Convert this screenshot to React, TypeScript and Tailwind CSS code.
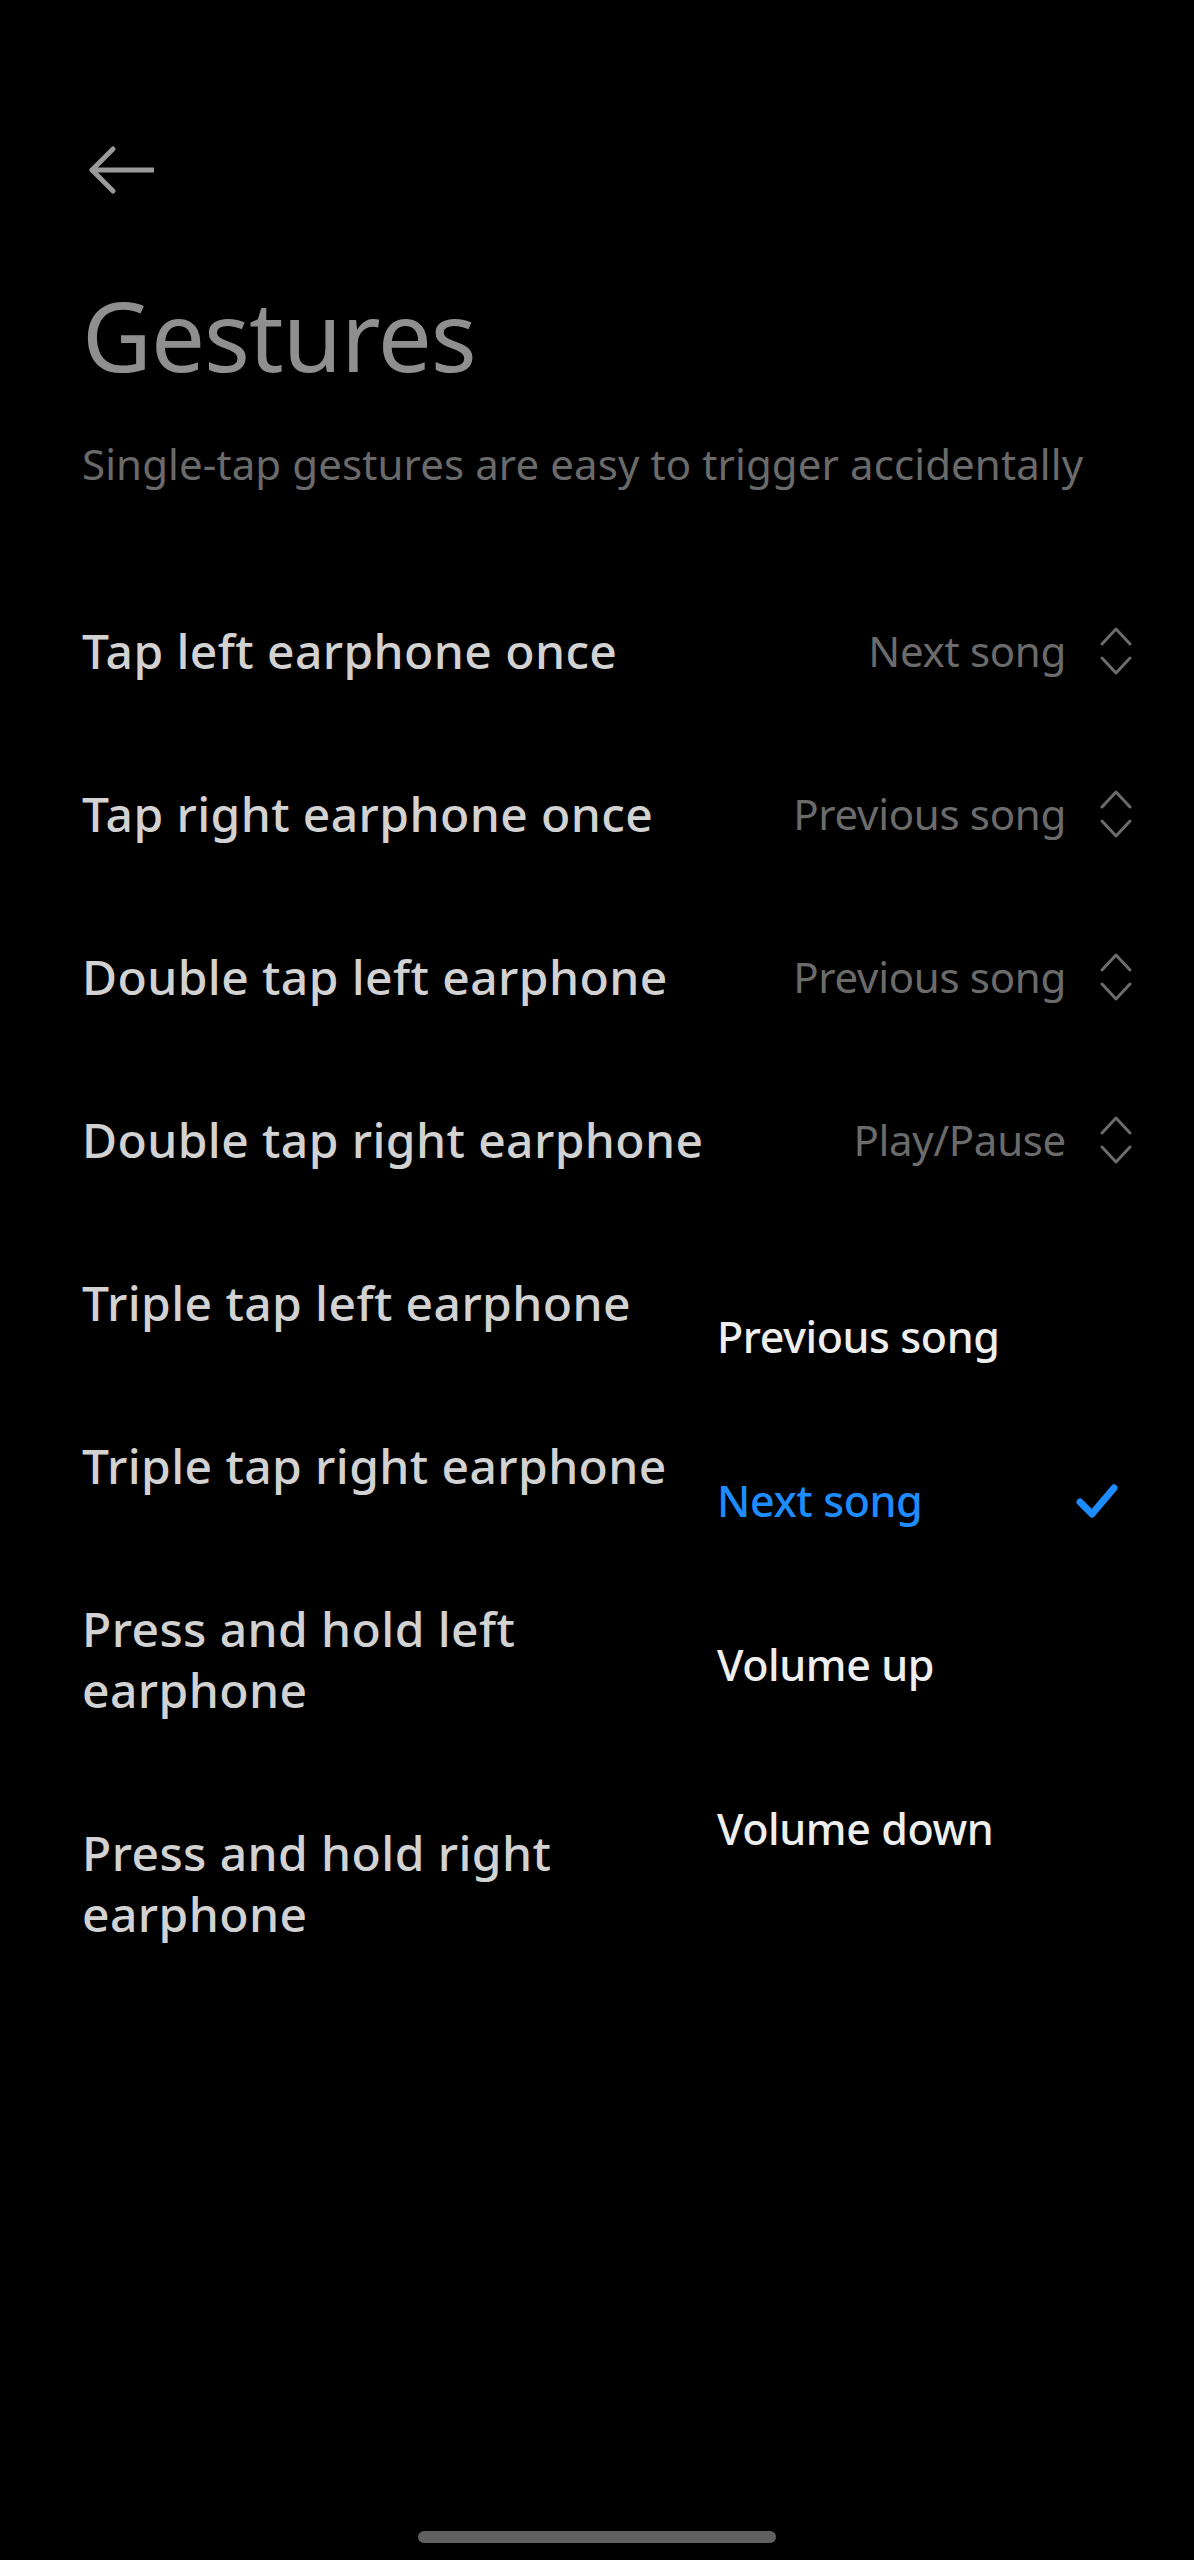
import React from 'react';

const rows: { label: string[]; value?: string }[] = [
  { label: ['Tap left earphone once'], value: 'Next song' },
  { label: ['Tap right earphone once'], value: 'Previous song' },
  { label: ['Double tap left earphone'], value: 'Previous song' },
  { label: ['Double tap right earphone'], value: 'Play/Pause' },
  { label: ['Triple tap left earphone'] },
  { label: ['Triple tap right earphone'] },
  { label: ['Press and hold left', 'earphone'] },
  { label: ['Press and hold right', 'earphone'] },
];

const options = ['Previous song', 'Next song', 'Volume up', 'Volume down'];

function UpDown() {
  return (
    <svg width="32" height="50" viewBox="0 0 32 50" fill="none" stroke="#6b6b6b" strokeWidth="3" strokeLinecap="round" strokeLinejoin="round">
      <path d="M2 18 L16 3 L30 18" />
      <path d="M2 32 L16 47 L30 32" />
    </svg>
  );
}

function Row({ label, value }: { label: string[]; value?: string }) {
  return (
    <div className="flex items-center justify-between py-[51px] min-h-[163px]">
      <div className="text-[48px] leading-[61px] font-medium text-[#d2d2d2] tracking-[0.4px]">
        {label.map((l, i) => (
          <div key={i}>{l}</div>
        ))}
      </div>
      {value && (
        <div className="flex items-center gap-[34px]">
          <span className="text-[42px] leading-[61px] text-[#6b6b6b] tracking-[-0.3px]">{value}</span>
          <UpDown />
        </div>
      )}
    </div>
  );
}

export default function App() {
  return (
    <div className="min-h-[2560px] w-[1194px] bg-black relative" style={{ fontFamily: '"Noto Sans", "Open Sans", sans-serif' }}>
      <div className="pl-[82px] pr-[62px]">
        <div className="pt-[140px]">
          <svg width="72" height="60" viewBox="0 0 72 60" fill="none" stroke="#9a9a9a" strokeWidth="5" strokeLinecap="round" strokeLinejoin="round">
            <path d="M10 30 H74" />
            <path d="M31 9 L10 30 L31 51" />
          </svg>
        </div>

        <h1 className="mt-[80px] text-[96px] leading-[110px] text-[#8f8f8f] tracking-[-1px]">Gestures</h1>
        <p className="mt-[46px] text-[42px] leading-[56px] text-[#6a6a6a] tracking-[0.1px]">
          Single-tap gestures are easy to trigger accidentally
        </p>

        <div className="relative mt-[77px]">
          {rows.map((r, i) => (
            <Row key={i} label={r.label} value={r.value} />
          ))}

          <div className="absolute left-[587px] right-[-35px] top-[686px] bg-black">
            {options.map((o) => {
              const active = o === 'Next song';
              return (
                <div key={o} className="flex items-center justify-between px-[48px] h-[164px]">
                  <span className={`text-[43px] font-medium tracking-[-0.4px] ${active ? 'text-[#1e8cff]' : 'text-[#eeeeee]'}`}>{o}</span>
                  {active && (
                    <svg width="44" height="36" viewBox="0 0 44 36" fill="none" stroke="#1e8cff" strokeWidth="7" strokeLinecap="round" strokeLinejoin="round">
                      <path d="M5 19 L17 31 L39 5" />
                    </svg>
                  )}
                </div>
              );
            })}
          </div>
        </div>
      </div>

      <div className="absolute left-[418px] top-[2531px] w-[358px] h-[12px] rounded-full bg-[#606060]" />
    </div>
  );
}
